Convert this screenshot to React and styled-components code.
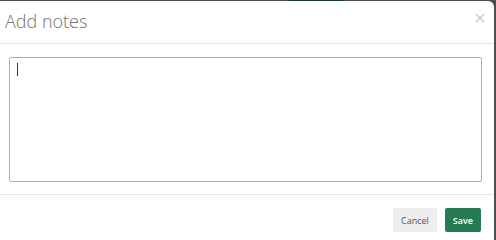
import styled, { createGlobalStyle } from "styled-components";

const Global = createGlobalStyle`
  html, body {
    margin: 0;
    padding: 0;
    background: #4d4d4d;
    font-family: "Open Sans", "Liberation Sans", sans-serif;
  }
`;

const Backdrop = styled.div`
  width: 496px;
  height: 240px;
  overflow: hidden;
  background: #4d4d4d;
`;

const TopStrip = styled.div`
  height: 1px;
  display: flex;
`;

const TabMark = styled.div`
  margin-left: 289px;
  width: 54px;
  background: #12402a;
`;

const Modal = styled.div`
  width: 494px;
  height: 239px;
  background: #fff;
  border-top-right-radius: 6px;
  display: flex;
  flex-direction: column;
`;

const Header = styled.div`
  flex-shrink: 0;
  height: 42px;
  border-bottom: 1px solid #e5e5e5;
  display: flex;
  align-items: center;
  justify-content: space-between;
  padding: 0 8px 0 5px;
`;

const Title = styled.h4`
  margin: 0 0 2px;
  font-size: 18px;
  font-weight: 300;
  color: #707070;
`;

const Close = styled.button`
  border: 0;
  background: none;
  padding: 0;
  width: 12px;
  height: 12px;
  margin-bottom: 8px;
  cursor: pointer;
  display: flex;
`;

const Body = styled.div`
  flex-shrink: 0;
  padding: 13px 12px 12px 9px;
  border-bottom: 1px solid #e5e5e5;
`;

const NoteField = styled.div`
  box-sizing: border-box;
  height: 125px;
  border: 1px solid #8ac3a4;
  border-radius: 2px;
  padding: 5px 7px;
`;

const Caret = styled.div`
  width: 1px;
  height: 13px;
  background: #333;
`;

const Footer = styled.div`
  flex: 1;
  display: flex;
  justify-content: flex-end;
  align-items: flex-start;
  gap: 8px;
  padding: 13px 13px 0 0;
`;

const Button = styled.button`
  height: 24px;
  border: 0;
  border-radius: 2px;
  padding: 0 ${(p) => (p.primary ? "8px" : "8px")};
  font-family: "Open Sans", "Liberation Sans", sans-serif;
  font-size: 9px;
  font-weight: ${(p) => (p.primary ? 600 : 400)};
  color: ${(p) => (p.primary ? "#fff" : "#555")};
  background: ${(p) => (p.primary ? "#267b55" : "#eeeeee")};
  cursor: pointer;
`;

export default function App() {
  return (
    <>
      <Global />
      <Backdrop>
        <TopStrip>
          <TabMark />
        </TopStrip>
        <Modal>
          <Header>
            <Title>Add notes</Title>
            <Close aria-label="Close">
              <svg width="12" height="12" viewBox="0 0 12 12">
                <path d="M2 2 L10 10 M10 2 L2 10" stroke="#c4c4c4" strokeWidth="1.2" />
              </svg>
            </Close>
          </Header>
          <Body>
            <NoteField>
              <Caret />
            </NoteField>
          </Body>
          <Footer>
            <Button>Cancel</Button>
            <Button primary>Save</Button>
          </Footer>
        </Modal>
      </Backdrop>
    </>
  );
}
